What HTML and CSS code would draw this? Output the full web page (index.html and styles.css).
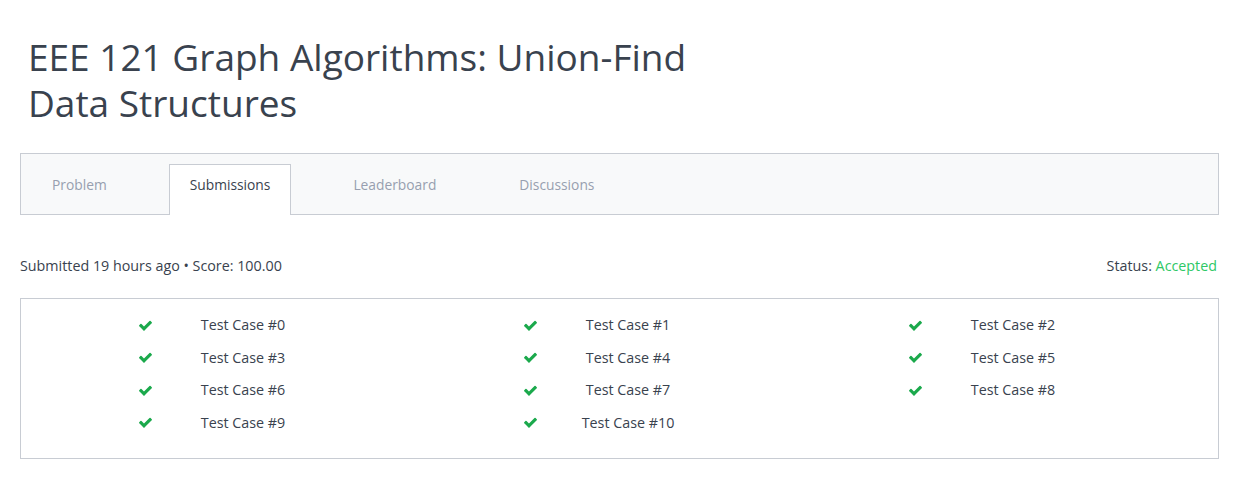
FILE: index.html
```html
<!DOCTYPE html>
<html>
<head>
<meta charset="utf-8">
<link rel="stylesheet" href="styles.css">
</head>
<body>
<div class="page">
  <h1 class="title">EEE 121 Graph Algorithms: Union-Find<br>Data Structures</h1>
  <div class="tabs">
    <div class="tab">Problem</div>
    <div class="tab active">Submissions</div>
    <div class="tab">Leaderboard</div>
    <div class="tab">Discussions</div>
  </div>
  <div class="meta">
    <div class="submitted">Submitted 19 hours ago • Score: 100.00</div>
    <div class="status">Status: <span class="accepted">Accepted</span></div>
  </div>
  <div class="results">
    <div class="case"><span class="icon"><svg viewBox="0 0 1792 1792"><path d="M1671 566q0 40-28 68l-724 724-136 136q-28 28-68 28t-68-28l-136-136-362-362q-28-28-28-68t28-68l136-136q28-28 68-28t68 28l294 295 656-657q28-28 68-28t68 28l136 136q28 28 28 68z"/></svg></span><span class="label">Test Case #0</span></div>
    <div class="case"><span class="icon"><svg viewBox="0 0 1792 1792"><path d="M1671 566q0 40-28 68l-724 724-136 136q-28 28-68 28t-68-28l-136-136-362-362q-28-28-28-68t28-68l136-136q28-28 68-28t68 28l294 295 656-657q28-28 68-28t68 28l136 136q28 28 28 68z"/></svg></span><span class="label">Test Case #1</span></div>
    <div class="case"><span class="icon"><svg viewBox="0 0 1792 1792"><path d="M1671 566q0 40-28 68l-724 724-136 136q-28 28-68 28t-68-28l-136-136-362-362q-28-28-28-68t28-68l136-136q28-28 68-28t68 28l294 295 656-657q28-28 68-28t68 28l136 136q28 28 28 68z"/></svg></span><span class="label">Test Case #2</span></div>
    <div class="case"><span class="icon"><svg viewBox="0 0 1792 1792"><path d="M1671 566q0 40-28 68l-724 724-136 136q-28 28-68 28t-68-28l-136-136-362-362q-28-28-28-68t28-68l136-136q28-28 68-28t68 28l294 295 656-657q28-28 68-28t68 28l136 136q28 28 28 68z"/></svg></span><span class="label">Test Case #3</span></div>
    <div class="case"><span class="icon"><svg viewBox="0 0 1792 1792"><path d="M1671 566q0 40-28 68l-724 724-136 136q-28 28-68 28t-68-28l-136-136-362-362q-28-28-28-68t28-68l136-136q28-28 68-28t68 28l294 295 656-657q28-28 68-28t68 28l136 136q28 28 28 68z"/></svg></span><span class="label">Test Case #4</span></div>
    <div class="case"><span class="icon"><svg viewBox="0 0 1792 1792"><path d="M1671 566q0 40-28 68l-724 724-136 136q-28 28-68 28t-68-28l-136-136-362-362q-28-28-28-68t28-68l136-136q28-28 68-28t68 28l294 295 656-657q28-28 68-28t68 28l136 136q28 28 28 68z"/></svg></span><span class="label">Test Case #5</span></div>
    <div class="case"><span class="icon"><svg viewBox="0 0 1792 1792"><path d="M1671 566q0 40-28 68l-724 724-136 136q-28 28-68 28t-68-28l-136-136-362-362q-28-28-28-68t28-68l136-136q28-28 68-28t68 28l294 295 656-657q28-28 68-28t68 28l136 136q28 28 28 68z"/></svg></span><span class="label">Test Case #6</span></div>
    <div class="case"><span class="icon"><svg viewBox="0 0 1792 1792"><path d="M1671 566q0 40-28 68l-724 724-136 136q-28 28-68 28t-68-28l-136-136-362-362q-28-28-28-68t28-68l136-136q28-28 68-28t68 28l294 295 656-657q28-28 68-28t68 28l136 136q28 28 28 68z"/></svg></span><span class="label">Test Case #7</span></div>
    <div class="case"><span class="icon"><svg viewBox="0 0 1792 1792"><path d="M1671 566q0 40-28 68l-724 724-136 136q-28 28-68 28t-68-28l-136-136-362-362q-28-28-28-68t28-68l136-136q28-28 68-28t68 28l294 295 656-657q28-28 68-28t68 28l136 136q28 28 28 68z"/></svg></span><span class="label">Test Case #8</span></div>
    <div class="case"><span class="icon"><svg viewBox="0 0 1792 1792"><path d="M1671 566q0 40-28 68l-724 724-136 136q-28 28-68 28t-68-28l-136-136-362-362q-28-28-28-68t28-68l136-136q28-28 68-28t68 28l294 295 656-657q28-28 68-28t68 28l136 136q28 28 28 68z"/></svg></span><span class="label">Test Case #9</span></div>
    <div class="case"><span class="icon"><svg viewBox="0 0 1792 1792"><path d="M1671 566q0 40-28 68l-724 724-136 136q-28 28-68 28t-68-28l-136-136-362-362q-28-28-28-68t28-68l136-136q28-28 68-28t68 28l294 295 656-657q28-28 68-28t68 28l136 136q28 28 28 68z"/></svg></span><span class="label">Test Case #10</span></div>
  </div>
</div>
</body>
</html>
```

FILE: styles.css
```css
* { box-sizing: border-box; }
html, body { margin: 0; padding: 0; background: #fff; }
body {
  font-family: "Open Sans", "Liberation Sans", sans-serif;
  color: #39424e;
  font-size: 14px;
}
.page {
  padding: 0 39px 0 20px;
}
.title {
  margin: 0;
  padding: 34px 0 0 8px;
  font-size: 37px;
  font-weight: 400;
  line-height: 46px;
  color: #39424e;
}
.tabs {
  margin-top: 27px;
  display: flex;
  align-items: flex-end;
  height: 62px;
  padding: 10px 0 0 10px;
  background: #f8f9fa;
  border: 1px solid #c8ccd3;
}
.tab {
  height: 51px;
  margin-bottom: -1px;
  margin-right: 41px;
  padding: 10px 20px 0;
  font-size: 13.8px;
  line-height: 20px;
  color: #979faf;
  border: 1px solid transparent;
  border-bottom: none;
}
.tab.active {
  background: #fff;
  color: #39424e;
  border-color: #c8ccd3;
}
.meta {
  display: flex;
  justify-content: space-between;
  margin-top: 41px;
  font-size: 14.3px;
  line-height: 20px;
  padding-right: 2px;
}
.accepted { color: #2ec866; }
.results {
  margin-top: 22px;
  border: 1px solid #c8ccd3;
  height: 161px;
  padding: 10px 21px 0;
  display: grid;
  grid-template-columns: repeat(3, 385px);
  grid-auto-rows: 32.5px;
  align-content: start;
}
.case {
  display: flex;
  align-items: center;
}
.icon {
  width: 130px;
  padding-left: 96px;
  display: flex;
  align-items: center;
}
.icon svg {
  width: 15px;
  height: 15px;
  fill: #1ba94c;
}
.label {
  width: 142px;
  text-align: center;
  font-size: 14.3px;
  line-height: 20px;
}
```
